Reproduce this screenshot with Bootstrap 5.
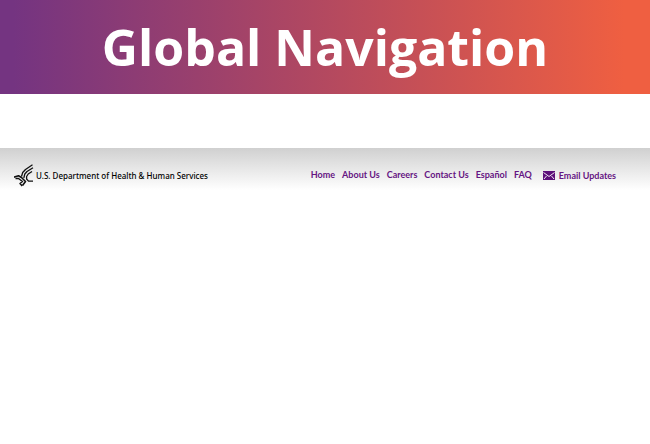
<!DOCTYPE html>
<html lang="en">
<head>
<meta charset="utf-8">
<meta name="viewport" content="width=device-width, initial-scale=1">
<title>Global Navigation</title>
<link rel="stylesheet" href="https://cdn.jsdelivr.net/npm/bootstrap@5.3.0/dist/css/bootstrap.min.css">
<style>
body { font-family: "Open Sans", sans-serif; background: #fff; }
.banner { background: linear-gradient(to right, #743481 2%, #a94565 42%, #ef5f41 96%); padding: 12px 0; }
.banner h1 { font-size: 50px; line-height: 70px; font-weight: 700; }
.global-bar { margin-top: 54px; padding: 16px 34px 3px 14px; background: linear-gradient(#d0d0d0, #fff); font-family: Lato, sans-serif; font-size: 9px; line-height: 12px; font-weight: 700; }
.global-bar a { color: #651482; text-decoration: none; white-space: nowrap; }
.global-bar a:hover { text-decoration: underline; }
.global-bar .agency { color: #000; gap: 2px; font-family: "Noto Sans", sans-serif; font-size: 8px; font-weight: 500; }
.links { gap: 7px; padding-bottom: 2px; }
.updates { gap: 4px; margin-left: 11px; }
</style>
</head>
<body>
<header class="banner text-center text-white">
  <h1 class="m-0">Global Navigation</h1>
</header>
<nav class="global-bar d-flex align-items-center" aria-label="Global">
  <a class="agency d-flex align-items-center me-auto" href="#">
    <svg width="20" height="23" viewBox="0 0 20 23" fill="none" stroke="#111" stroke-width="1.3" stroke-linejoin="round" aria-hidden="true">
      <path d="M18.500 .8L11.500 5.500L8.700 8.500L7.500 12.500"/>
      <path d="M19 3.800L13 7.500L10.800 10L9.800 14"/>
      <path d="M18 7.500L14.200 10L12.600 12.500V15L14.500 17.200H19"/>
      <path d="M0 13.200L4.500 11.700L7.500 13.500L11.500 17.500L8.500 21.500" stroke-width="1.600"/>
      <path d="M1.500 14.500H4.500L8.500 17.500L6 19.500L8.200 22" stroke-width="1.500"/>
    </svg>
    <span>U.S. Department of Health &amp; Human Services</span>
  </a>
  <ul class="links list-unstyled d-flex m-0">
    <li><a href="#">Home</a></li>
    <li><a href="#">About Us</a></li>
    <li><a href="#">Careers</a></li>
    <li><a href="#">Contact Us</a></li>
    <li><a href="#" lang="es">Español</a></li>
    <li><a href="#">FAQ</a></li>
  </ul>
  <a class="updates d-flex align-items-center" href="#">
    <svg width="12" height="9" viewBox="0 0 12 9" aria-hidden="true">
      <path fill="#5c1079" d="M0 0H12V9H0Z"/>
      <path fill="none" stroke="#fff" stroke-width=".9" d="M.5 1.500L6 5.500L11.500 1.500M1 8L3.500 5M11 8L8.500 5"/>
    </svg>
    <span>Email Updates</span>
  </a>
</nav>
<script src="https://cdn.jsdelivr.net/npm/bootstrap@5.3.0/dist/js/bootstrap.bundle.min.js"></script>
</body>
</html>
